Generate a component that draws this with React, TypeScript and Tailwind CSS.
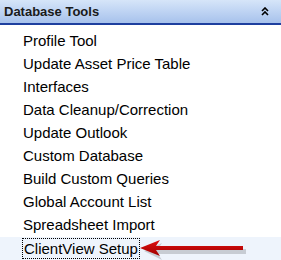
const tools = [
  "Profile Tool",
  "Update Asset Price Table",
  "Interfaces",
  "Data Cleanup/Correction",
  "Update Outlook",
  "Custom Database",
  "Build Custom Queries",
  "Global Account List",
  "Spreadsheet Import",
];

function CollapseIcon() {
  return (
    <svg width="8" height="9" viewBox="0 0 8 9" className="block">
      <path d="M1 4 L4 1 L7 4" fill="none" stroke="#000" strokeWidth="1.6" />
      <path d="M1 8 L4 5 L7 8" fill="none" stroke="#000" strokeWidth="1.6" />
    </svg>
  );
}

function Arrow() {
  return (
    <svg width="108" height="22" viewBox="0 0 108 22" className="block">
      <defs>
        <linearGradient id="shaft" x1="0" y1="0" x2="0" y2="1">
          <stop offset="0" stopColor="#e01010" />
          <stop offset="1" stopColor="#a00000" />
        </linearGradient>
      </defs>
      {/* shadow */}
      <path d="M4 13 L22 5 L18 11 L106 11 L106 16 L18 16 L22 22 Z" fill="#000" opacity="0.16" />
      <path d="M0 10 L20 2 L16 8 L103 8 L103 12 L16 12 L20 18 Z" fill="url(#shaft)" />
    </svg>
  );
}

export default function App() {
  return (
    <div className="h-[260px] w-[281px] overflow-hidden bg-white font-['Liberation_Sans',Arial,sans-serif]">
      <div className="flex h-[25px] items-center justify-between border-b-2 border-[#1e3f9f] bg-gradient-to-b from-[#d6e5f9] to-[#a7c2ec] pl-[4px] pr-[12px]">
        <span className="text-[13px] font-bold text-[#1a1a1a]">Database Tools</span>
        <CollapseIcon />
      </div>
      <ul className="pt-[5px]">
        {tools.map((t) => (
          <li key={t} className="flex h-[23px] items-center pl-[23px] text-[15px] text-black">
            {t}
          </li>
        ))}
        <li className="flex h-[23px] items-center bg-[#eef4fc] pl-[22px] text-[15px] text-black">
          <span className="border border-dotted border-black px-[1px] leading-[19px]">ClientView Setup</span>
          <Arrow />
        </li>
      </ul>
    </div>
  );
}
